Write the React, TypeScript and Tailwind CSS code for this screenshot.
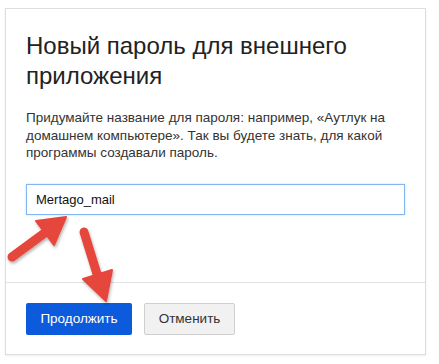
export default function App() {
  return (
    <div className="relative w-[439px] h-[364px] bg-white pt-2 pl-[5px] font-['Liberation_Sans',Arial,sans-serif]">
      <div className="w-[421px] h-[347px] flex flex-col border border-[#dedede] bg-white shadow-[0_1px_2px_rgba(0,0,0,0.08)]">
        <div className="flex-1 px-[20px] pt-[22px]">
          <h1 className="text-[24px] leading-[30px] text-[#222] font-normal">
            Новый пароль для внешнего приложения
          </h1>
          <p className="mt-[18px] text-[13.5px] leading-[17.5px] text-[#333]">
            Придумайте название для пароля: например, «Аутлук на домашнем компьютере». Так вы будете знать, для какой программы создавали пароль.
          </p>
          <input
            defaultValue="Mertago_mail"
            className="mt-[22px] w-full h-[31px] px-[9px] border border-[#80b7f2] text-[13px] text-[#111] outline-none shadow-[0_0_2px_rgba(80,150,240,0.35)]"
          />
        </div>
        <div className="border-t border-[#e2e2e2] px-[20px] pt-[20px] pb-[19px] flex gap-[12px]">
          <button className="w-[106px] h-[32px] rounded-[2px] bg-[#0b5bdc] text-white text-[13.5px]">
            Продолжить
          </button>
          <button className="w-[91px] h-[32px] rounded-[2px] bg-[#f1f1f1] border border-[#cfcfcf] text-[#333] text-[13.5px]">
            Отменить
          </button>
        </div>
      </div>

      {/* red annotation arrows */}
      <svg
        className="absolute left-0 top-0 pointer-events-none"
        width="439"
        height="364"
        viewBox="0 0 439 364"
      >
        <defs>
          <filter id="sh" x="-20%" y="-20%" width="140%" height="140%">
            <feDropShadow dx="1" dy="2" stdDeviation="1.5" floodColor="#000" floodOpacity="0.3" />
          </filter>
        </defs>
        <g fill="#e5463c" stroke="#e5463c" filter="url(#sh)">
          <line x1="12" y1="257" x2="46" y2="232" strokeWidth="9" strokeLinecap="round" />
          <polygon points="66,217 36,221 54,245" strokeWidth="2" strokeLinejoin="round" />
          <line x1="84" y1="232" x2="97" y2="274" strokeWidth="9" strokeLinecap="round" />
          <polygon points="106,301 83,279 112,270" strokeWidth="2" strokeLinejoin="round" />
        </g>
      </svg>
    </div>
  )
}
